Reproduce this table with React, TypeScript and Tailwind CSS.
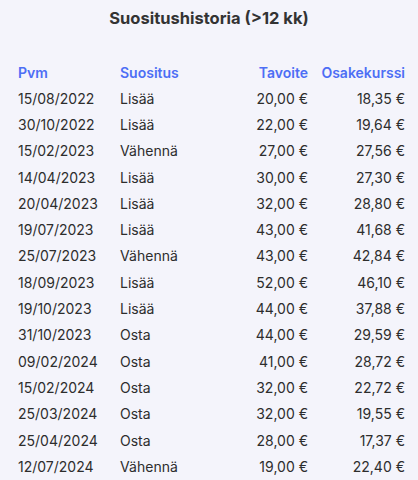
import React from 'react';

const rows = [
  ['15/08/2022', 'Lisää', '20,00 €', '18,35 €'],
  ['30/10/2022', 'Lisää', '22,00 €', '19,64 €'],
  ['15/02/2023', 'Vähennä', '27,00 €', '27,56 €'],
  ['14/04/2023', 'Lisää', '30,00 €', '27,30 €'],
  ['20/04/2023', 'Lisää', '32,00 €', '28,80 €'],
  ['19/07/2023', 'Lisää', '43,00 €', '41,68 €'],
  ['25/07/2023', 'Vähennä', '43,00 €', '42,84 €'],
  ['18/09/2023', 'Lisää', '52,00 €', '46,10 €'],
  ['19/10/2023', 'Lisää', '44,00 €', '37,88 €'],
  ['31/10/2023', 'Osta', '44,00 €', '29,59 €'],
  ['09/02/2024', 'Osta', '41,00 €', '28,72 €'],
  ['15/02/2024', 'Osta', '32,00 €', '22,72 €'],
  ['25/03/2024', 'Osta', '32,00 €', '19,55 €'],
  ['25/04/2024', 'Osta', '28,00 €', '17,37 €'],
  ['12/07/2024', 'Vähennä', '19,00 €', '22,40 €'],
];

const App = () => {
  return (
    <div className="min-h-[480px] w-[418px] bg-[#f4f4fb] font-['Inter',sans-serif] text-[#2d2d2d]">
      <h1 className="pt-[8px] text-center text-[16.5px] font-bold leading-[20px] text-[#333]">
        Suositushistoria (&gt;12 kk)
      </h1>

      <div className="mt-[31px] grid grid-cols-[102px_1fr_100px_97px] pl-[18px] pr-[13px] text-[14px]">
        <div className="flex h-[26px] items-center font-semibold text-[#4d6ef5]">Pvm</div>
        <div className="flex h-[26px] items-center font-semibold text-[#4d6ef5]">Suositus</div>
        <div className="flex h-[26px] items-center justify-end font-semibold text-[#4d6ef5]">Tavoite</div>
        <div className="flex h-[26px] items-center justify-end font-semibold text-[#4d6ef5]">Osakekurssi</div>

        {rows.map((r) => (
          <React.Fragment key={r[0]}>
            <div className="flex h-[26.3px] items-center">{r[0]}</div>
            <div className="flex h-[26.3px] items-center">{r[1]}</div>
            <div className="flex h-[26.3px] items-center justify-end">{r[2]}</div>
            <div className="flex h-[26.3px] items-center justify-end">{r[3]}</div>
          </React.Fragment>
        ))}
      </div>
    </div>
  );
};

export default App;
